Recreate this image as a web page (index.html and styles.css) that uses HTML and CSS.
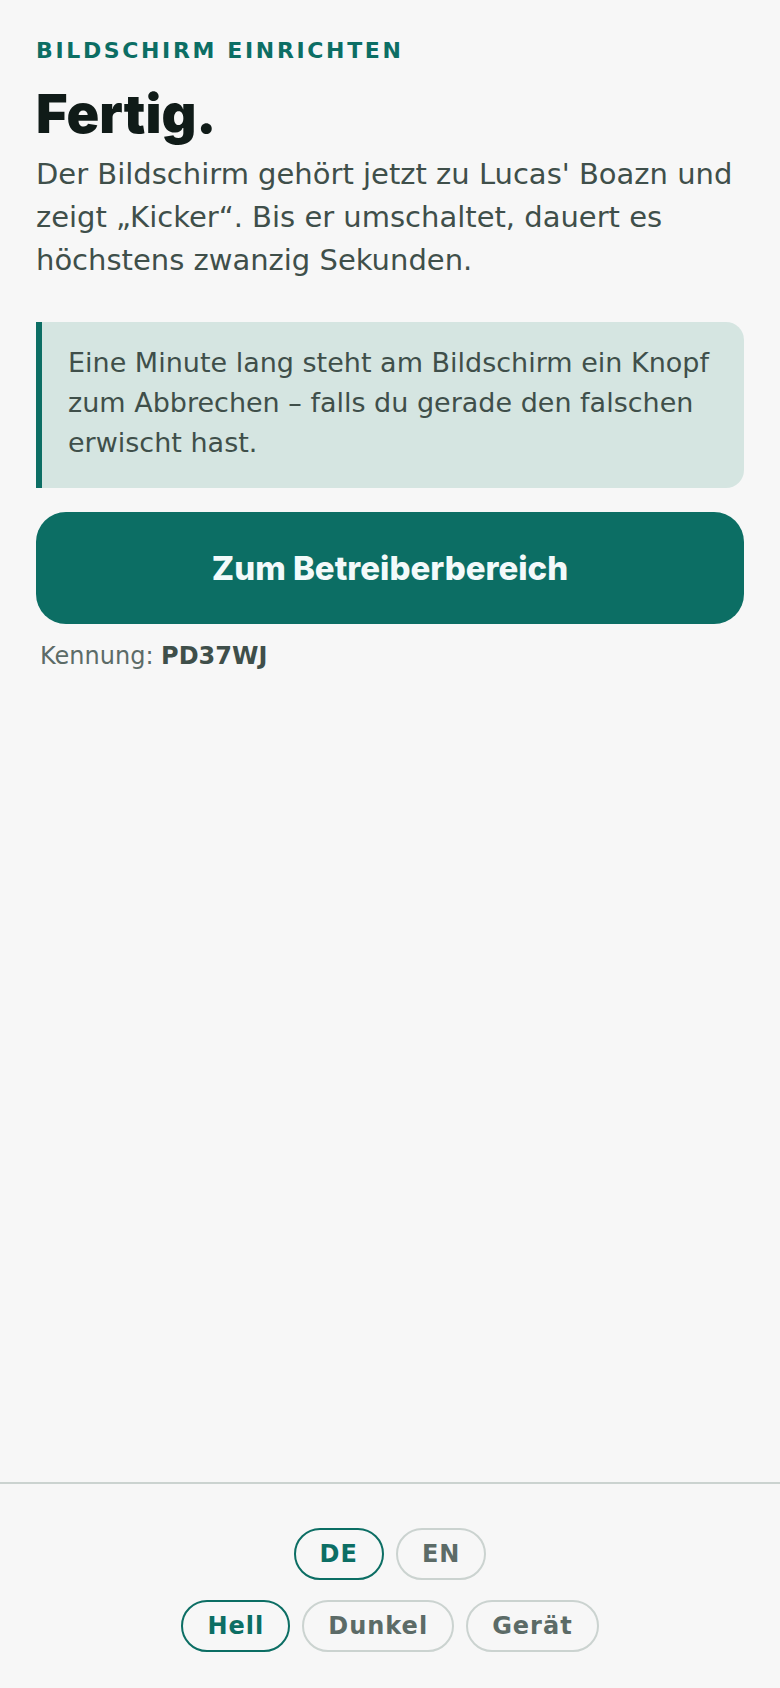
FILE: index.html
```
<!DOCTYPE html>
<html lang="de">
<head>
    <meta charset="UTF-8">
    <meta name="viewport" content="width=device-width, initial-scale=1">
    <title>Bildschirm einrichten</title>
    <link rel="stylesheet" href="styles.css">
</head>
<body>
    <main class="page">
        <p class="eyebrow">Bildschirm einrichten</p>
        <h1>Fertig.</h1>
        <p class="lead">Der Bildschirm gehört jetzt zu Lucas' Boazn und zeigt „Kicker“. Bis er umschaltet, dauert es höchstens zwanzig Sekunden.</p>
        <p class="note">Eine Minute lang steht am Bildschirm ein Knopf zum Abbrechen – falls du gerade den falschen erwischt hast.</p>
        <button type="button" class="primary">Zum Betreiberbereich</button>
        <p class="code">Kennung: <strong>PD37WJ</strong></p>
    </main>

    <!-- Language and theme -->
    <footer class="footer">
        <div class="choices">
            <button type="button" class="pill active">DE</button>
            <button type="button" class="pill">EN</button>
        </div>
        <div class="choices">
            <button type="button" class="pill active">Hell</button>
            <button type="button" class="pill">Dunkel</button>
            <button type="button" class="pill">Gerät</button>
        </div>
    </footer>
</body>
</html>
```

FILE: styles.css
```
* {
    box-sizing: border-box;
}
body {
    display: flex;
    flex-direction: column;
    min-height: 100vh;
    margin: 0;
    background-color: #f7f7f7;
    color: #3f4f4a;
    font-family: "DejaVu Sans", sans-serif;
}
h1, p {
    margin: 0;
}
.page {
    display: flex;
    flex-direction: column;
    flex: 1;
    padding: 36px;
}
.eyebrow {
    color: #0c6e64;
    font-size: 22px;
    font-weight: bold;
    line-height: 30px;
    letter-spacing: 0.12em;
    text-transform: uppercase;
}
h1 {
    margin-top: 20px;
    color: #101b18;
    font-family: Inter, sans-serif;
    font-size: 54px;
    font-weight: 900;
    line-height: 55px;
}
.lead {
    margin-top: 12px;
    font-size: 29px;
    line-height: 43px;
}
.note {
    margin-top: 40px;
    padding: 21px 26px 25px;
    border-left: 6px solid #0c6e64;
    border-radius: 0 18px 18px 0;
    background-color: #d5e5e1;
    font-size: 27px;
    line-height: 40px;
}
.primary {
    margin-top: 24px;
    padding: 36px;
    border: 0;
    border-radius: 30px;
    background-color: #0c6e64;
    color: #f3fafa;
    font-family: Inter, sans-serif;
    font-size: 33px;
    font-weight: 800;
    line-height: 40px;
    cursor: pointer;
}
.code {
    margin-top: 16px;
    padding: 0 4px;
    color: #5c6b67;
    font-size: 24px;
    line-height: 32px;
}
.code strong {
    color: #3f4f4a;
}
.footer {
    display: flex;
    flex-direction: column;
    gap: 20px;
    padding: 44px 36px 36px;
    border-top: 2px solid #cbd3d0;
}
.choices {
    display: flex;
    justify-content: center;
    gap: 12px;
}
.pill {
    padding: 10px 24px;
    border: 2px solid #cbd3d0;
    border-radius: 26px;
    background: none;
    color: #5c6b67;
    font-family: inherit;
    font-size: 24px;
    font-weight: bold;
    line-height: 28px;
    letter-spacing: 1px;
    cursor: pointer;
}
.pill.active {
    border-color: #0c6e64;
    color: #0c6e64;
}
```
